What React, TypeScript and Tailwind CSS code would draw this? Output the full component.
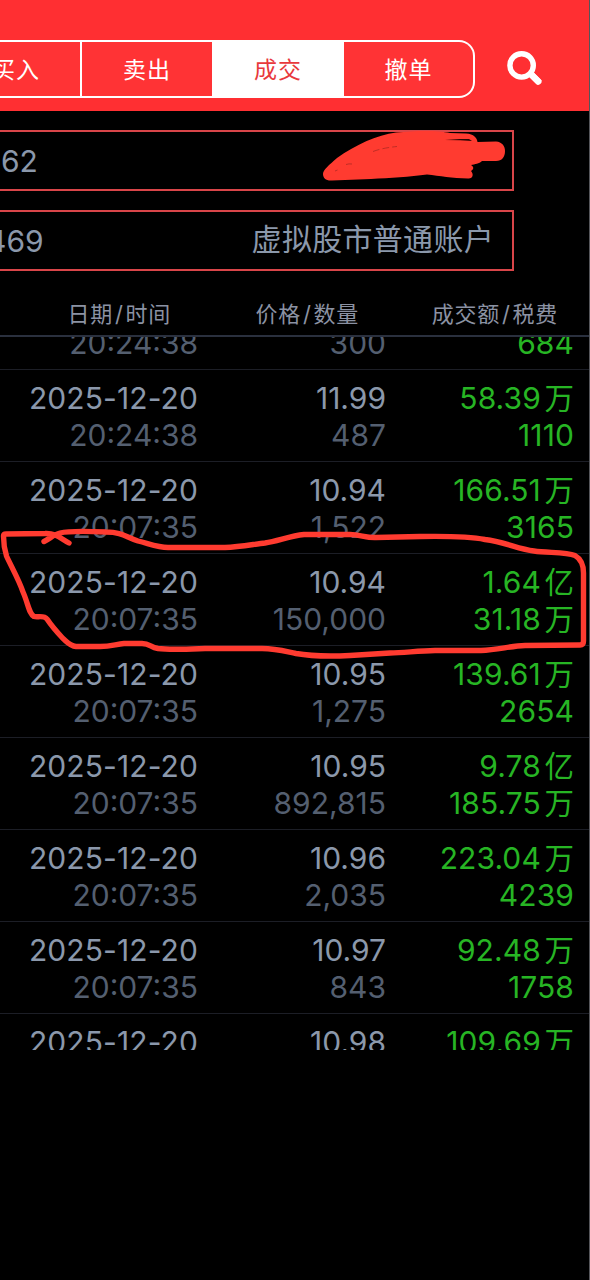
import React from 'react';

interface Trade {
  date?: string;
  time?: string;
  price?: string;
  quantity?: string;
  amount?: string;
  fee?: string;
}

const tabs = ['买入', '卖出', '成交', '撤单'];

// First and last rows are scrolled half out of the list
const trades: Trade[] = [
  { time: '20:24:38', quantity: '300', fee: '684' },
  { date: '2025-12-20', time: '20:24:38', price: '11.99', quantity: '487', amount: '58.39万', fee: '1110' },
  { date: '2025-12-20', time: '20:07:35', price: '10.94', quantity: '1,522', amount: '166.51万', fee: '3165' },
  { date: '2025-12-20', time: '20:07:35', price: '10.94', quantity: '150,000', amount: '1.64亿', fee: '31.18万' },
  { date: '2025-12-20', time: '20:07:35', price: '10.95', quantity: '1,275', amount: '139.61万', fee: '2654' },
  { date: '2025-12-20', time: '20:07:35', price: '10.95', quantity: '892,815', amount: '9.78亿', fee: '185.75万' },
  { date: '2025-12-20', time: '20:07:35', price: '10.96', quantity: '2,035', amount: '223.04万', fee: '4239' },
  { date: '2025-12-20', time: '20:07:35', price: '10.97', quantity: '843', amount: '92.48万', fee: '1758' },
  { date: '2025-12-20', price: '10.98', amount: '109.69万' },
];

// Splits the trailing unit off so it can get its own spacing
const Amount: React.FC<{ value?: string }> = ({ value = '' }) => {
  const unit = value.match(/[万亿]$/)?.[0];
  return (
    <div className="h-[37px]">
      {unit ? value.slice(0, -1) : value}
      {unit && <span className="ml-[3.5px] text-[29.5px]">{unit}</span>}
    </div>
  );
};

const TradeRow: React.FC<{ trade: Trade }> = ({ trade }) => (
  <div className="flex h-[92px] shrink-0 border-b border-[#1c1e26] pt-[10px] text-right text-[30px] leading-[37px] text-[#8b98ab]">
    <div className="w-[198px] shrink-0">
      <div className="h-[37px] tracking-[0.1px]">{trade.date}</div>
      <div className="h-[37px] text-[#545f70]">{trade.time}</div>
    </div>
    <div className="w-[188px] shrink-0">
      <div className="h-[37px]">{trade.price}</div>
      <div className="h-[37px] text-[#545f70]">{trade.quantity}</div>
    </div>
    <div className="w-[188px] shrink-0 tracking-[0.1px] text-[#27b524]">
      <Amount value={trade.amount} />
      <Amount value={trade.fee} />
    </div>
  </div>
);

const Header: React.FC = () => (
  <header className="flex h-[111px] items-start bg-[#ff2f32] pt-[40px]">
    <div className="flex h-[58px] w-[475px] justify-end overflow-hidden rounded-r-[16px] border-y-2 border-r-2 border-white bg-[#ff3335]">
      {tabs.map((tab) => (
        <button
          key={tab}
          className={`flex shrink-0 items-center justify-center pt-[2px] text-[23px] tracking-[1px] ${
            tab === '成交' ? 'w-[132px] bg-white text-[#e8393c]' : tab === '撤单' ? 'w-[129px] text-white' : 'w-[130px] text-white'
          } ${tab === '买入' ? 'border-r-2 border-white' : ''}`}
        >
          {tab}
        </button>
      ))}
    </div>
    <svg className="ml-[31px] mt-[10px] h-[38px] w-[38px]" viewBox="0 0 38 38" fill="none" stroke="white">
      <circle cx="15.6" cy="15.4" r="11.7" strokeWidth="5.4" />
      <path d="M23.500 22.800L33.500 32.800" strokeWidth="6.4" />
      <path d="M26 25.300L32.300 31.600" strokeWidth="6.4" strokeLinecap="round" />
    </svg>
  </header>
);

// Hand-drawn marker strokes lying over the page
const Markup: React.FC = () => (
  <svg className="pointer-events-none absolute inset-0 h-[1280px] w-[590px]" viewBox="0 0 590 1280" fill="none">
    <path
      d="M323 174C323 170 329 165 337 158C355 145 377 135 396 132.500C415 130.500 438 130 450 133L466 133.500C474 134 477 138 477.500 142L496 141.500C502 142 505 146 505 151C505 157 502 161 496 161L482 161C479 164 475 164 471 165C474 167 474 169 471 171C474 174 473 179 468 178.500C452 178 440 176 427 174.500C410 177 390 178 371 179L332 180.500C326 181 323 178 323 174Z"
      fill="#ff3b30"
    />
    <path d="M445 140L460 139L469 139L472 141L460 140.300Z" fill="#2a0705" />
    <path d="M335 171L337.500 170M346 164.500Q349 163.500 352 164M373 151.500Q382 148 397 146.500" stroke="#b02a22" strokeWidth="0.8" strokeDasharray="7 3" />
    <path
      d="M44 541.500C50 538.500 54 534.500 60 533C68 531 95 531.500 106 532C122 532 126 537 138 541C150 544 158 547.500 168 547.500L225 547.500C240 547 255 544 265 543C278 541 290 536 304 534.500L350 534.500C360 534.500 366 538 376 537.500L420 536.500C450 536 470 536.500 485 539.500C505 542 518 549 534 551C548 553 566 552 575 555.500C581 559 583.500 565 583.500 573L583.500 641Q583.500 645 580 645L525 645.500C510 646 498 650 481 650.500L435 650.500C418 651 405 652.500 390 653L350 655.500C330 656.500 310 656 296 653.500C284 651 276 648.500 262 648.500L205 648.500C190 649 170 650 158 648.500C150 647 150 643.500 142 643.500L124 643.500C116 644 110 647 98 646.500L76 646.500C70 646 67 642 63 638.500C56 631 51 625 47 619C44 615 38 617.500 34 616.500C29 614 28 603 23 592C19 580 11 566 6.500 556C4 548 3.500 542 3.500 536Q3.500 534 6 534L45 533.500C56 533 60 538 69 543"
      stroke="#ff3b30"
      strokeWidth="5.4"
      strokeLinecap="round"
      strokeLinejoin="round"
    />
  </svg>
);

const App: React.FC = () => {
  return (
    <div className="relative h-[1280px] w-[590px] overflow-hidden bg-black font-['Inter','Noto_Sans_CJK_SC',sans-serif]">
      <Header />

      <div className="mt-[19px] flex flex-col gap-[19px] text-[30px] text-[#8b98ab]">
        <div className="flex h-[61px] w-[514px] items-center border-y-2 border-r-2 border-[#d94549] pl-px pt-px">62</div>
        <div className="flex h-[61px] w-[514px] items-center justify-between border-y-2 border-r-2 border-[#d94549] pr-[18px] pt-px">
          <span className="-ml-[13px]">469</span>
          <span className="pb-[3px] tracking-[0.3px]">虚拟股市普通账户</span>
        </div>
      </div>

      <div className="mt-[20px] flex h-[46px] items-center border-b-2 border-[#2a303e] pt-[2px] text-right text-[22px] tracking-[0.7px] text-[#8b92a3]">
        <div className="w-[171px]">日期<span className="mx-[2px]">/</span>时间</div>
        <div className="w-[188px]">价格<span className="mx-[2px]">/</span>数量</div>
        <div className="w-[199px]">成交额<span className="mx-[2px]">/</span>税费</div>
      </div>

      <div className="flex h-[713px] flex-col overflow-hidden">
        <div className="-mt-[59px] flex flex-col">
          {trades.map((trade, index) => (
            <TradeRow key={index} trade={trade} />
          ))}
        </div>
      </div>

      <Markup />
      <div className="absolute right-0 top-0 h-full w-px bg-[#55565a]" />
    </div>
  );
};

export default App;
